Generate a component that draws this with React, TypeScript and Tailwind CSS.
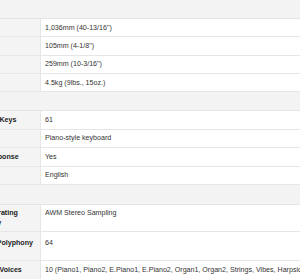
import React from "react";

type Row = { label: string; value: string; h: string; pt?: string };

const font = { fontFamily: '"Liberation Sans", Arial, sans-serif' };

function Header({ h }: { h: string }) {
  return <div className={`bg-[#f3f3f3] border-b border-[#e4e4e4] ${h}`} />;
}

function DataRow({ row }: { row: Row }) {
  const align = row.pt ? "items-start" : "items-center";
  return (
    <div className={`flex border-b border-[#e6e6e6] ${row.h}`}>
      <div
        className={`flex ${align} ${row.pt ?? ""} w-[83px] shrink-0 bg-[#f4f4f4] border-r border-[#e6e6e6] pl-[4px] pr-[4px] text-[7.1px] leading-[10px] font-bold text-[#222]`}
      >
        <span>{row.label}</span>
      </div>
      <div
        className={`flex ${align} ${row.pt ?? ""} flex-1 bg-white pl-[4px] text-[7.1px] leading-[10px] text-[#333] whitespace-nowrap`}
      >
        <span>{row.value}</span>
      </div>
    </div>
  );
}

export default function App() {
  const s1: Row[] = [
    { label: "Width", value: "1,036mm (40-13/16\")", h: "h-[18px]" },
    { label: "Height", value: "105mm (4-1/8\")", h: "h-[18.5px]" },
    { label: "Depth", value: "259mm (10-3/16\")", h: "h-[18.5px]" },
    { label: "Weight", value: "4.5kg (9lbs., 15oz.)", h: "h-[18px]" },
  ];
  const s2: Row[] = [
    { label: "Number of Keys", value: "61", h: "h-[18.5px]" },
    { label: "Type", value: "Piano-style keyboard", h: "h-[18.5px]" },
    { label: "Touch Response", value: "Yes", h: "h-[18.5px]" },
    { label: "Language", value: "English", h: "h-[18px]" },
  ];
  const s3: Row[] = [
    { label: "Tone Generating Technology", value: "AWM Stereo Sampling", h: "h-[27px]", pt: "pt-[3px]" },
    { label: "Maximum Polyphony", value: "64", h: "h-[29px]", pt: "pt-[6px]" },
    {
      label: "Number of Voices",
      value:
        "10 (Piano1, Piano2, E.Piano1, E.Piano2, Organ1, Organ2, Strings, Vibes, Harpsichord1, Harpsichord2)",
      h: "h-[40px]",
      pt: "pt-[4px]",
    },
  ];
  return (
    <div className="w-[300px] h-[279px] overflow-hidden bg-white" style={font}>
      <div className="ml-[-42px] w-[700px] flex flex-col">
        <Header h="h-[19px]" />
        {s1.map((r) => (
          <DataRow key={r.label} row={r} />
        ))}
        <Header h="h-[19px]" />
        {s2.map((r) => (
          <DataRow key={r.label} row={r} />
        ))}
        <Header h="h-[20px]" />
        {s3.map((r) => (
          <DataRow key={r.label} row={r} />
        ))}
      </div>
    </div>
  );
}
